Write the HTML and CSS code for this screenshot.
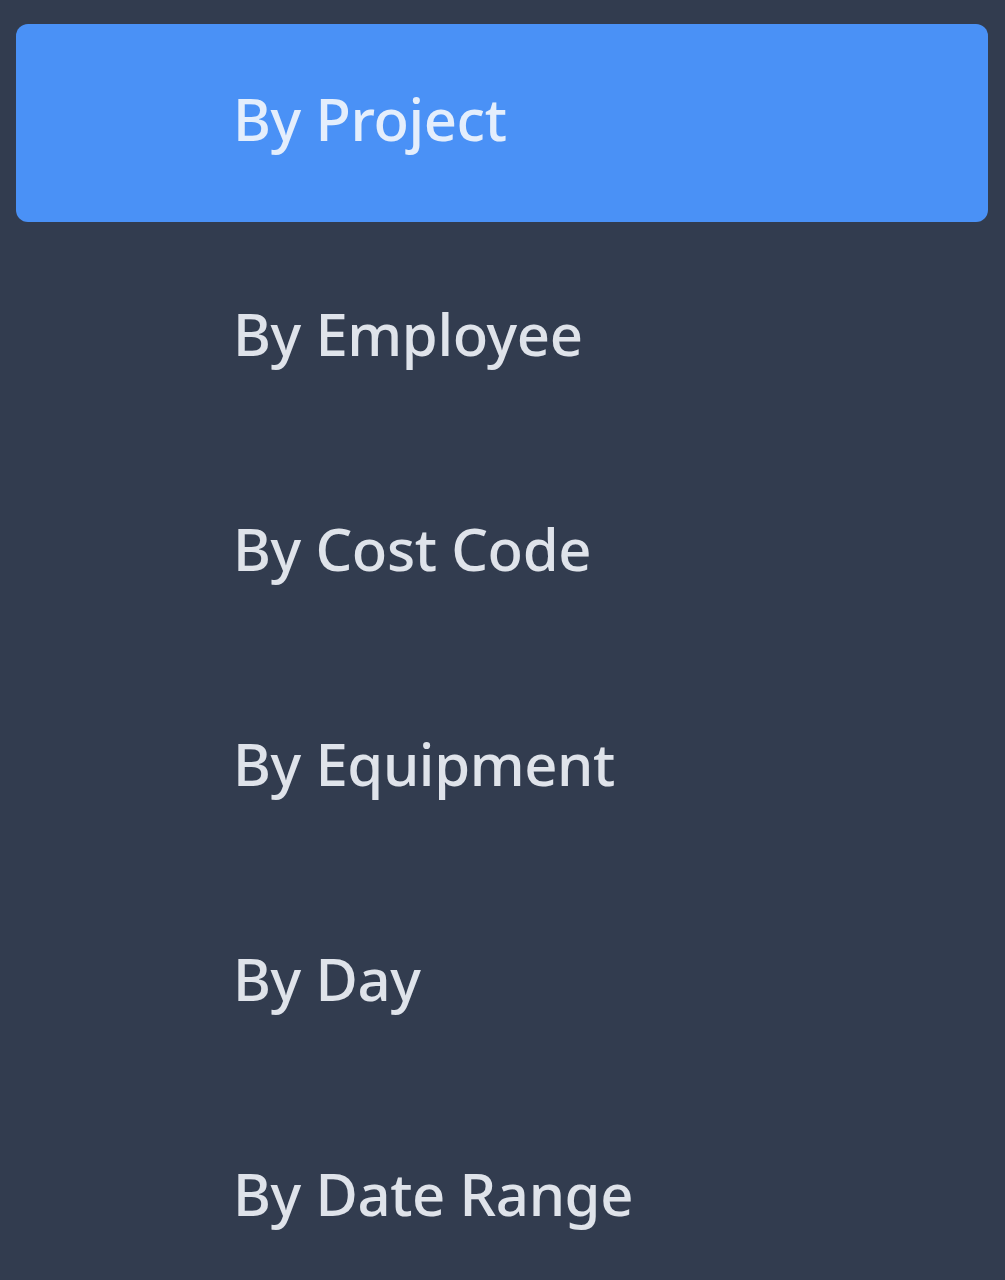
FILE: index.html
```html
<!DOCTYPE html>
<html lang="en">
<head>
<meta charset="utf-8">
<title>Report menu</title>
<link rel="stylesheet" href="styles.css">
</head>
<body>
<nav class="menu">
  <a class="item active" href="#">By Project</a>
  <a class="item" href="#">By Employee</a>
  <a class="item" href="#">By Cost Code</a>
  <a class="item" href="#">By Equipment</a>
  <a class="item" href="#">By Day</a>
  <a class="item" href="#">By Date Range</a>
</nav>
</body>
</html>
```
FILE: styles.css
```css
html, body {
  margin: 0;
  padding: 0;
  background: #323c4f;
  height: 100%;
  overflow: hidden;
}
.menu {
  display: flex;
  flex-direction: column;
  gap: 17px;
  padding: 24px 17px 0 16px;
}
.item {
  display: flex;
  align-items: center;
  height: 198px;
  flex: none;
  padding: 0 0 9px 217px;
  border-radius: 12px;
  color: #dfe3ea;
  text-decoration: none;
  font-family: "Noto Sans", "Open Sans", sans-serif;
  font-weight: 500;
  font-size: 58px;
  letter-spacing: -0.4px;
  box-sizing: border-box;
}
.item.active {
  background: #4a91f6;
  color: #e4eefc;
}
```
